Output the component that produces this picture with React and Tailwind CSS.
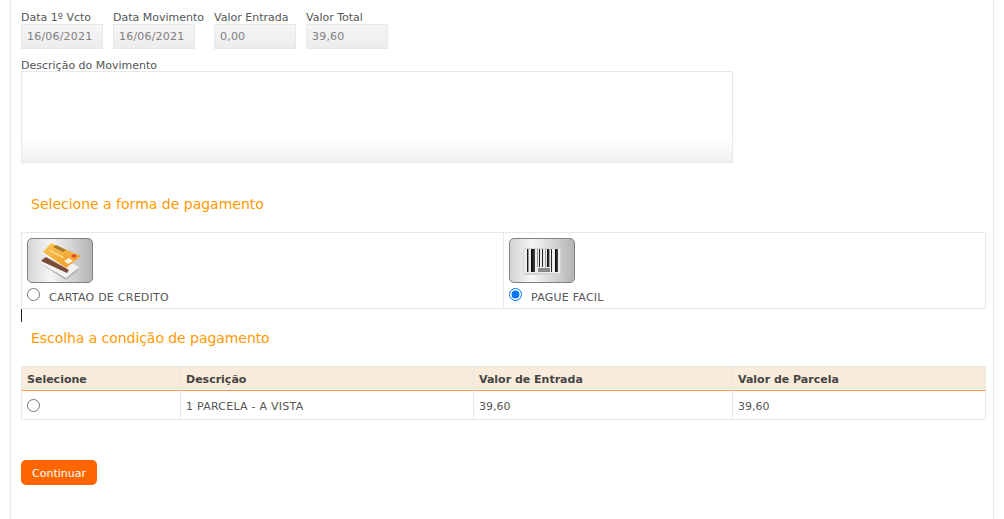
const font = "font-['Verdana','DejaVu_Sans',sans-serif]"

function Field({ label, value, width }) {
  return (
    <div className={`flex flex-col ${width}`}>
      <label className="h-[11px] text-[11px] leading-[11px] whitespace-nowrap text-[#555]">{label}</label>
      <input
        readOnly
        value={value}
        className="mt-[1px] h-[25px] w-[82px] border border-[#e8e8e8] bg-gradient-to-b from-[#f6f6f6] to-[#ececec] px-[5px] text-[11px] tracking-[0.2px] text-[#808080] outline-none"
      />
    </div>
  )
}

function CardIcon() {
  return (
    <svg width="52" height="43" viewBox="0 0 52 43">
      <defs>
        <linearGradient id="cardTop" x1="0" y1="0" x2="1" y2="1">
          <stop offset="0" stopColor="#f8c656" />
          <stop offset="1" stopColor="#f09a22" />
        </linearGradient>
      </defs>
      <polygon points="5,24 32,41 45,31 40,29 31,38" fill="#b5b5b5" />
      <polygon points="5,22 18,15 45,28 32,39" fill="#f5f3f1" />
      <polygon points="9,20 12,18 35,31 33,34 7,22" fill="#7a4a3a" />
      <polygon points="17,4 47,17 32,29 9,13" fill="url(#cardTop)" />
      <polygon points="19,8 22,6 32,11 29,13" fill="#a8782c" />
      <polygon points="15,12 16,11 30,18 29,19" fill="#fbdf9a" />
      <polygon points="37,17 40,15 43,17 40,19" fill="#e2442f" />
      <polygon points="30,22 35,19 39,22 34,25" fill="#fdf3e0" />
    </svg>
  )
}

function BarcodeIcon() {
  const bars = [
    [4, 1.5], [8, 4], [14, 0.5], [16, 1], [19, 1], [22, 0.5], [24, 2.5], [28, 1], [32, 3],
  ]
  return (
    <svg width="38" height="43" viewBox="0 0 38 43">
      <defs>
        <linearGradient id="barFade" x1="0" y1="0" x2="1" y2="0">
          <stop offset="0" stopColor="#000000" />
          <stop offset="1" stopColor="#4a4a4a" />
        </linearGradient>
      </defs>
      <rect y="9" width="38" height="27" rx="2" fill="#d4d4d4" />
      <rect x="1" y="10" width="36" height="24" fill="#ececec" />
      {bars.map(([x, w]) => (
        <rect key={x} x={x} y="10" width={w} height={x > 13 && x < 28 ? 18 : 23} fill="url(#barFade)" />
      ))}
      <rect x="15" y="29" width="12" height="4" fill="#8a8a8a" />
    </svg>
  )
}

function PayOption({ icon, label, name, checked, className }) {
  return (
    <td className={`h-[76px] border border-[#e8e8e8] p-0 align-top ${className}`}>
      <div className="ml-[5px] mt-[5px] flex h-[45px] w-[66px] items-center justify-center rounded-[5px] border border-[#808080] bg-gradient-to-r from-[#d4d4d4] via-[#f6f6f6] via-35% to-[#b4b4b4]">
        {icon}
      </div>
      <div className="mt-[5px] flex h-[16px] items-start pl-[5px]">
        <input type="radio" name={name} defaultChecked={checked} className="m-0 h-[13px] w-[13px] accent-[#0075ff]" />
        <span className="ml-[9px] mt-[3px] text-[11px] leading-[13px] tracking-[0.25px] text-[#555]">{label}</span>
      </div>
    </td>
  )
}

export default function App() {
  return (
    <div className={`${font} min-h-[519px] bg-white`}>
      <div className="mx-[10px] h-[519px] border-x border-[#e8e8e8] pl-[10px] pr-[9px] pt-[12px]">
        <div className="flex">
          <Field label="Data 1º Vcto" value="16/06/2021" width="w-[92px]" />
          <Field label="Data Movimento" value="16/06/2021" width="w-[101px]" />
          <Field label="Valor Entrada" value="0,00" width="w-[92px]" />
          <Field label="Valor Total" value="39,60" width="w-[82px]" />
        </div>

        <div className="mt-[11px] h-[11px] text-[11px] leading-[11px] text-[#555]">Descrição do Movimento</div>
        <div className="h-[92px] w-[712px] border border-[#e8e8e8] bg-[linear-gradient(to_bottom,#ffffff_72%,#f1f1f1_100%)]"></div>

        <h2 className="mt-[32px] h-[18px] pl-[10px] text-[14px] leading-[18px] font-normal text-[#ff9900]">Selecione a forma de pagamento</h2>

        <table className="mt-[19px] w-[965px] table-fixed border-collapse">
          <tbody>
            <tr>
              <PayOption icon={<CardIcon />} label="CARTAO DE CREDITO" name="forma" className="w-[482px]" />
              <PayOption icon={<BarcodeIcon />} label="PAGUE FACIL" name="forma" checked />
            </tr>
          </tbody>
        </table>

        <div className="h-[13px] w-px bg-[#222]"></div>

        <h2 className="mt-[7px] h-[18px] pl-[10px] text-[14px] leading-[18px] font-normal tracking-[-0.06px] text-[#ff9900]">Escolha a condição de pagamento</h2>

        <table className="mt-[19px] w-[965px] table-fixed border-separate border-spacing-0 text-[11px]">
          <thead>
            <tr className="bg-[#f9ecdc] text-left font-bold text-[#444]">
              <th className="h-[25px] w-[159px] border-t border-l border-b border-[#e8e8e8] border-b-[#ff9955] pl-[5px] pt-[3px]">Selecione</th>
              <th className="h-[25px] w-[293px] border-t border-l border-b border-[#e8e8e8] border-b-[#ff9955] pl-[5px] pt-[3px]">Descrição</th>
              <th className="h-[25px] w-[259px] border-t border-l border-b border-[#e8e8e8] border-b-[#ff9955] pl-[5px] pt-[3px]">Valor de Entrada</th>
              <th className="h-[25px] border-t border-x border-b border-[#e8e8e8] border-b-[#ff9955] pl-[5px] pt-[3px]">Valor de Parcela</th>
            </tr>
          </thead>
          <tbody>
            <tr className="text-[#555]">
              <td className="h-[29px] border-l border-b border-[#e8e8e8] pl-[5px]">
                <input type="radio" name="condicao" className="m-0 block h-[13px] w-[13px]" />
              </td>
              <td className="h-[29px] border-l border-b border-[#e8e8e8] pl-[5px] pt-[4px] tracking-[0.25px]">1 PARCELA - A VISTA</td>
              <td className="h-[29px] border-l border-b border-[#e8e8e8] pl-[5px] pt-[4px]">39,60</td>
              <td className="h-[29px] border-x border-b border-[#e8e8e8] pl-[5px] pt-[4px]">39,60</td>
            </tr>
          </tbody>
        </table>

        <button className="mt-[40px] block h-[25px] w-[76px] rounded-[5px] bg-[#ff6600] pt-[3px] text-[11px] text-white">Continuar</button>
      </div>
    </div>
  )
}
